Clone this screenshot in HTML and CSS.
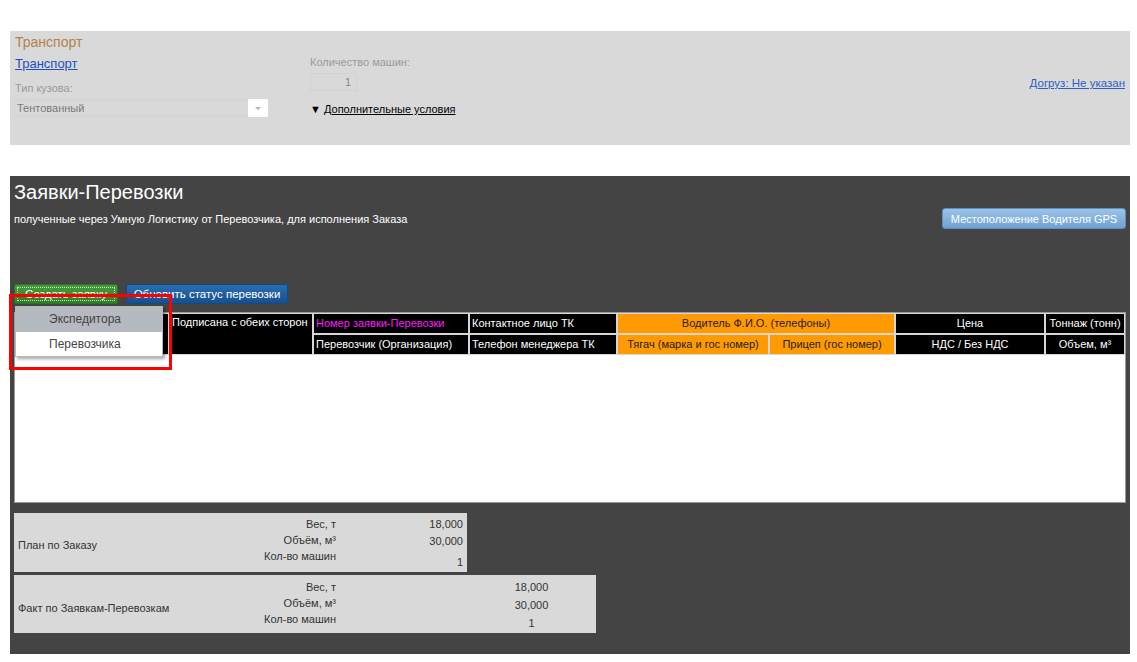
FILE: index.html
```html
<!DOCTYPE html>
<html lang="ru">
<head>
<meta charset="utf-8">
<title>Заявки-Перевозки</title>
<link rel="stylesheet" href="styles.css">
</head>
<body>
<div class="page">
  <section class="transport">
    <div class="col-left">
      <div class="t-title">Транспорт</div>
      <a class="t-link" href="#">Транспорт</a>
      <div class="t-label">Тип кузова:</div>
      <div class="select">
        <span class="select-text">Тентованный</span>
        <span class="select-btn"><span class="caret"></span></span>
      </div>
    </div>
    <div class="col-mid">
      <div class="t-label">Количество машин:</div>
      <div class="num-input">1</div>
      <a class="more-link" href="#"><span class="tri">&#9660;</span> <u>Дополнительные условия</u></a>
    </div>
    <div class="col-right">
      <a class="dogruz" href="#">Догруз: Не указан</a>
    </div>
  </section>

  <section class="orders">
    <h1 class="o-title">Заявки-Перевозки</h1>
    <div class="o-sub-row">
      <div class="o-sub">полученные через Умную Логистику от Перевозчика, для исполнения Заказа</div>
      <button class="btn-gps">Местоположение Водителя GPS</button>
    </div>
    <div class="btn-row">
      <button class="btn-green"><span class="focus">Создать заявку</span></button>
      <button class="btn-blue">Обновить статус перевозки</button>
    </div>
    <div class="grid-box">
      <table class="grid">
        <colgroup>
          <col class="w0"><col class="w1"><col class="w2"><col class="w3"><col class="w4"><col class="w5"><col class="w6"><col>
        </colgroup>
        <tr>
          <th rowspan="2"></th>
          <th rowspan="2" class="top left">Подписана с обеих сторон</th>
          <th class="left magenta">Номер заявки-Перевозки</th>
          <th class="left">Контактное лицо ТК</th>
          <th colspan="2" class="orange">Водитель Ф.И.О. (телефоны)</th>
          <th>Цена</th>
          <th>Тоннаж (тонн)</th>
        </tr>
        <tr>
          <th class="left">Перевозчик (Организация)</th>
          <th class="left">Телефон менеджера ТК</th>
          <th class="orange">Тягач (марка и гос номер)</th>
          <th class="orange">Прицеп (гос номер)</th>
          <th>НДС / Без НДС</th>
          <th>Объем, м³</th>
        </tr>
      </table>
    </div>

    <div class="sum sum-plan">
      <div class="s-name">План по Заказу</div>
      <div class="s-labels"><div>Вес, т</div><div>Объём, м³</div><div>Кол-во машин</div></div>
      <div class="s-values"><div>18,000</div><div>30,000</div><div class="last">1</div></div>
    </div>
    <div class="sum sum-fact">
      <div class="s-name">Факт по Заявкам-Перевозкам</div>
      <div class="s-labels"><div>Вес, т</div><div>Объём, м³</div><div>Кол-во машин</div></div>
      <div class="s-spacer"></div>
      <div class="s-values"><div>18,000</div><div>30,000</div><div>1</div></div>
    </div>

    <div class="menu">
      <div class="menu-item active">Экспедитора</div>
      <div class="menu-item">Перевозчика</div>
    </div>
    <div class="highlight"></div>
  </section>
</div>
</body>
</html>
```

FILE: styles.css
```css
* { box-sizing: border-box; }
html, body { margin: 0; padding: 0; background: #fff; }
body {
  font-family: "Liberation Sans", Arial, sans-serif;
  font-size: 11px;
  color: #333;
}
.page { padding: 31px 7px 8px 10px; }

/* ---------- top transport panel ---------- */
.transport {
  background: #d9d9d9;
  height: 114px;
  display: flex;
  padding: 3px 5px 0 5px;
  margin-bottom: 31px;
}
.col-left { width: 295px; display: flex; flex-direction: column; align-items: flex-start; }
.t-title { font-size: 14px; line-height: 17px; color: #b3814f; }
.t-link { margin-top: 5px; font-size: 13px; line-height: 16px; color: #1f4fc2; text-decoration: underline; }
.t-label { font-size: 11px; line-height: 14px; color: #9a9a9a; }
.col-left .t-label { margin-top: 9px; }
.select {
  margin-top: 4px;
  margin-left: -1px;
  width: 254px;
  height: 18px;
  border: 1px solid #d4d4d4;
  background: #d9d9d9;
  display: flex;
  align-items: center;
  justify-content: space-between;
}
.select-text { padding-left: 2px; color: #7a7a7a; font-size: 11px; line-height: 16px; }
.select-btn {
  width: 20px; height: 18px; margin: -1px -1px -1px 0;
  background: #fff;
  display: flex; align-items: center; justify-content: center;
}
.caret { width: 0; height: 0; border-left: 3px solid transparent; border-right: 3px solid transparent; border-top: 3px solid #b0b0b0; }

.col-mid { margin-top: 21px; display: flex; flex-direction: column; align-items: flex-start; }
.num-input {
  margin-top: 4px;
  width: 47px; height: 18px;
  border: 1px solid #d2d2d2;
  text-align: right;
  padding-right: 5px;
  color: #888;
  font-size: 11px; line-height: 16px;
}
.more-link { margin-top: 11px; color: #000; font-size: 11px; line-height: 14px; text-decoration: none; }
.more-link .tri { font-size: 11px; }
.col-right { flex: 1; display: flex; justify-content: flex-end; padding-top: 42px; }
.dogruz { color: #2d5fc0; font-size: 11.5px; line-height: 14px; text-decoration: underline; height: 14px; }

/* ---------- orders panel ---------- */
.orders {
  position: relative;
  background: #444;
  padding: 5px 4px 21px 4px;
}
.o-title { margin: 0; font-size: 20px; line-height: 23px; font-weight: normal; color: #fff; }
.o-sub-row { margin-top: 4px; display: flex; align-items: center; justify-content: space-between; height: 21px; }
.o-sub { color: #fff; font-size: 11px; }
.btn-gps {
  width: 184px; height: 21px;
  border: 1px solid #5c8fc4;
  border-radius: 3px;
  background: linear-gradient(#9cc3e8, #6fa2d4);
  color: #fff;
  font-family: "Liberation Sans", Arial, sans-serif;
  font-size: 11px;
  padding: 0;
}
.btn-row { margin-top: 55px; display: flex; gap: 8px; height: 20px; }
.btn-green {
  width: 104px; height: 20px; padding: 2px;
  border: 1px solid #2b7424;
  border-radius: 2px;
  background: linear-gradient(#4a9a3d, #2f7f28);
  color: #fff;
  font-family: "Liberation Sans", Arial, sans-serif;
  font-size: 11.5px;
}
.btn-green .focus { display: block; height: 14px; line-height: 13px; border: 1px dotted #c8e6c0; }
.btn-blue {
  width: 162px; height: 20px; padding: 0;
  border: 1px solid #144a82;
  border-radius: 2px;
  background: linear-gradient(#2a6db2, #184f8c);
  color: #fff;
  font-family: "Liberation Sans", Arial, sans-serif;
  font-size: 11.5px;
}

.grid-box {
  margin-top: 8px;
  height: 191px;
  background: #fff;
  border: 1px solid #9a9a9a;
}
.grid { width: 100%; table-layout: fixed; border-collapse: separate; border-spacing: 0; }
.w0 { width: 154px; }
.w1 { width: 144px; }
.w2 { width: 156px; }
.w3 { width: 148px; }
.w4 { width: 152px; }
.w5 { width: 126px; }
.w6 { width: 150px; }
.grid th {
  background: #000;
  color: #fff;
  font-weight: normal;
  font-size: 11px;
  height: 21px;
  line-height: 17px;
  padding: 0 2px 1px 2px;
  border: 1px solid #d6d6d6;
  text-align: center;
  vertical-align: middle;
  white-space: nowrap;
  overflow: hidden;
}
.grid th.left { text-align: left; }
.grid th.top { vertical-align: top; }
.grid th.magenta { color: #ff1aff; }
.grid th.orange { background: #ff9a00; color: #222; }

.sum {
  margin-top: 10px;
  background: #d9d9d9;
  display: grid;
  color: #333;
  font-size: 11px;
}
.sum-plan { width: 453px; height: 59px; grid-template-columns: 172px 154px 127px; padding-top: 3px; }
.sum-fact { margin-top: 3px; width: 582px; height: 58px; grid-template-columns: 172px 154px 127px 129px; padding-top: 4px; }
.s-name { padding-left: 4px; align-self: center; white-space: nowrap; }
.sum-plan .s-name { padding-top: 2px; }
.sum-fact .s-name { padding-top: 4px; }
.s-labels { text-align: right; padding-right: 4px; line-height: 16px; }
.sum-plan .s-values { text-align: right; padding-right: 4px; line-height: 16.5px; }
.sum-plan .s-values .last { margin-top: 5px; }
.sum-fact .s-values { text-align: center; line-height: 18px; margin-top: -1px; }

/* ---------- overlays ---------- */
.menu {
  position: absolute;
  left: 5px; top: 130px;
  width: 148px; height: 51px;
  background: #fff;
  border: 1px solid #b8b8b8;
  box-shadow: 2px 2px 3px rgba(0,0,0,0.35);
}
.menu-item { height: 25px; line-height: 25px; padding-left: 33px; font-size: 12px; color: #444; }
.menu-item.active { background: #b5b9c0; }
.highlight {
  position: absolute;
  left: -1px; top: 118px;
  width: 163px; height: 76px;
  border: 3px solid #f00;
  pointer-events: none;
}
```
